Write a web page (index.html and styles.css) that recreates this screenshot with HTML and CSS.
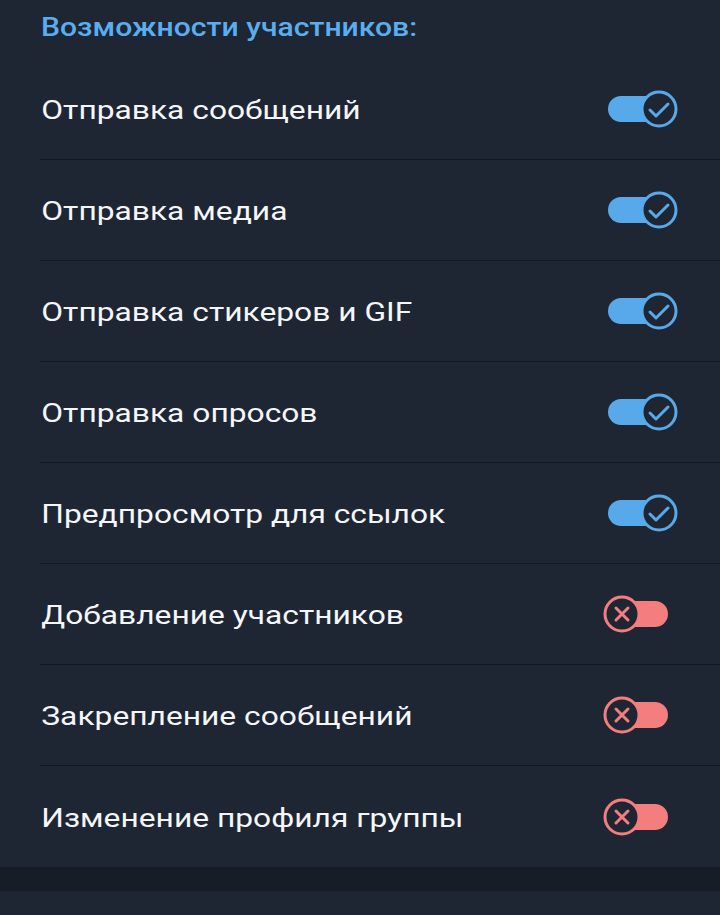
FILE: index.html
```html
<!DOCTYPE html>
<html lang="ru">
<head>
<meta charset="utf-8">
<link rel="stylesheet" href="styles.css">
</head>
<body>
<div class="section">
  <div class="header"><span class="header-text">Возможности участников:</span></div>
  <div class="list">
    <div class="row"><span class="label">Отправка сообщений</span>
      <svg class="toggle" viewBox="0 0 80 40" width="80" height="40"><rect class="track-on" x="6" y="7" width="60" height="26" rx="13"/><circle class="knob-on" cx="57" cy="20" r="17"/><path class="mark-on" d="M48 21 L54 27 L66 15"/></svg></div>
    <div class="row"><span class="label">Отправка медиа</span>
      <svg class="toggle" viewBox="0 0 80 40" width="80" height="40"><rect class="track-on" x="6" y="7" width="60" height="26" rx="13"/><circle class="knob-on" cx="57" cy="20" r="17"/><path class="mark-on" d="M48 21 L54 27 L66 15"/></svg></div>
    <div class="row"><span class="label">Отправка стикеров и GIF</span>
      <svg class="toggle" viewBox="0 0 80 40" width="80" height="40"><rect class="track-on" x="6" y="7" width="60" height="26" rx="13"/><circle class="knob-on" cx="57" cy="20" r="17"/><path class="mark-on" d="M48 21 L54 27 L66 15"/></svg></div>
    <div class="row"><span class="label">Отправка опросов</span>
      <svg class="toggle" viewBox="0 0 80 40" width="80" height="40"><rect class="track-on" x="6" y="7" width="60" height="26" rx="13"/><circle class="knob-on" cx="57" cy="20" r="17"/><path class="mark-on" d="M48 21 L54 27 L66 15"/></svg></div>
    <div class="row"><span class="label">Предпросмотр для ссылок</span>
      <svg class="toggle" viewBox="0 0 80 40" width="80" height="40"><rect class="track-on" x="6" y="7" width="60" height="26" rx="13"/><circle class="knob-on" cx="57" cy="20" r="17"/><path class="mark-on" d="M48 21 L54 27 L66 15"/></svg></div>
    <div class="row"><span class="label">Добавление участников</span>
      <svg class="toggle" viewBox="0 0 80 40" width="80" height="40"><rect class="track-off" x="6" y="7" width="60" height="26" rx="13"/><circle class="knob-off" cx="20" cy="20" r="17"/><path class="mark-off" d="M14 14 L26 26 M26 14 L14 26"/></svg></div>
    <div class="row"><span class="label">Закрепление сообщений</span>
      <svg class="toggle" viewBox="0 0 80 40" width="80" height="40"><rect class="track-off" x="6" y="7" width="60" height="26" rx="13"/><circle class="knob-off" cx="20" cy="20" r="17"/><path class="mark-off" d="M14 14 L26 26 M26 14 L14 26"/></svg></div>
    <div class="row last"><span class="label">Изменение профиля группы</span>
      <svg class="toggle" viewBox="0 0 80 40" width="80" height="40"><rect class="track-off" x="6" y="7" width="60" height="26" rx="13"/><circle class="knob-off" cx="20" cy="20" r="17"/><path class="mark-off" d="M14 14 L26 26 M26 14 L14 26"/></svg></div>
  </div>
</div>
<div class="strip"></div>
</body>
</html>
```
FILE: styles.css
```css
html, body {
  margin: 0;
  padding: 0;
  background: #1e2633;
  font-family: Roboto, "Noto Sans", sans-serif;
}
body {
  width: 720px;
  height: 915px;
  overflow: hidden;
}
.section {
  background: #1e2633;
}
.header {
  height: 59px;
  box-sizing: border-box;
  padding: 13px 0 0 41px;
  line-height: 30px;
}
.header-text {
  display: inline-block;
  font-size: 25px;
  font-weight: 500;
  color: #5aaeef;
  transform: scaleX(1.205);
  transform-origin: left center;
}
.list {
  margin-left: 40px;
}
.row {
  height: 100px;
  border-bottom: 1px solid #111822;
  display: flex;
  align-items: center;
  justify-content: space-between;
  padding-right: 38px;
}
.row.last {
  border-bottom: none;
  height: 101px;
}
.label {
  display: inline-block;
  font-size: 25px;
  color: #f4f6f9;
  padding-left: 1px;
  padding-top: 3px;
  transform: scaleX(1.27);
  transform-origin: left center;
  white-space: nowrap;
}
.toggle {
  display: block;
  flex: none;
}
.track-on { fill: #58a9ea; }
.knob-on { fill: #1e2633; stroke: #58a9ea; stroke-width: 3; }
.mark-on { fill: none; stroke: #58a9ea; stroke-width: 3; stroke-linecap: round; stroke-linejoin: round; }
.track-off { fill: #f47d7d; }
.knob-off { fill: #1e2633; stroke: #f47d7d; stroke-width: 3; }
.mark-off { fill: none; stroke: #f47d7d; stroke-width: 3; stroke-linecap: round; }
.strip {
  height: 24px;
  background: #171d26;
}
```
